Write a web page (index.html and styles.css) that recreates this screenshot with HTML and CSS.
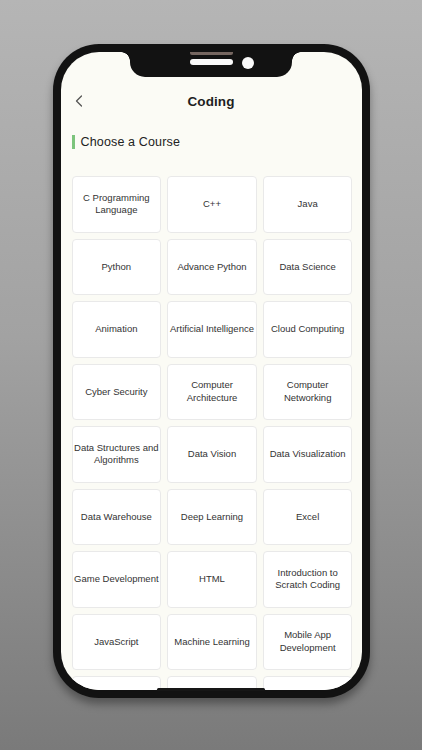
FILE: index.html
```html
<!DOCTYPE html>
<html>
<head>
<meta charset="utf-8">
<link rel="stylesheet" href="styles.css">
</head>
<body>
<div class="stage">
  <div class="phone">
    <div class="screen">
      <div class="notch">
        <span class="grille"></span>
        <span class="speaker"></span>
        <span class="camera"></span>
      </div>
      <div class="header">
        <div class="back">
          <svg width="8" height="12" viewBox="0 0 8 12"><path d="M6.5 1 L1.5 6 L6.5 11" fill="none" stroke="#555" stroke-width="1.3" stroke-linecap="round" stroke-linejoin="round"/></svg>
        </div>
        <div class="title">Coding</div>
        <div></div>
      </div>
      <div class="section">Choose a Course</div>
      <div class="grid">
        <div class="cell">C Programming Language</div>
        <div class="cell">C++</div>
        <div class="cell">Java</div>
        <div class="cell">Python</div>
        <div class="cell">Advance Python</div>
        <div class="cell">Data Science</div>
        <div class="cell">Animation</div>
        <div class="cell">Artificial Intelligence</div>
        <div class="cell">Cloud Computing</div>
        <div class="cell">Cyber Security</div>
        <div class="cell">Computer Architecture</div>
        <div class="cell">Computer Networking</div>
        <div class="cell">Data Structures and Algorithms</div>
        <div class="cell">Data Vision</div>
        <div class="cell">Data Visualization</div>
        <div class="cell">Data Warehouse</div>
        <div class="cell">Deep Learning</div>
        <div class="cell">Excel</div>
        <div class="cell">Game Development</div>
        <div class="cell">HTML</div>
        <div class="cell">Introduction to Scratch Coding</div>
        <div class="cell">JavaScript</div>
        <div class="cell">Machine Learning</div>
        <div class="cell">Mobile App Development</div>
        <div class="cell"></div>
        <div class="cell"></div>
        <div class="cell"></div>
      </div>
    </div>
    <div class="home"></div>
  </div>
</div>
</body>
</html>
```
FILE: styles.css
```css
html, body {
  margin: 0;
  padding: 0;
}
body {
  width: 422px;
  height: 750px;
  overflow: hidden;
  background: linear-gradient(180deg, #b5b5b5 0%, #a2a2a2 45%, #7a7a7a 100%);
  font-family: "Liberation Sans", Arial, sans-serif;
}
.stage {
  display: flex;
  justify-content: center;
  padding-top: 44px;
}
.phone {
  position: relative;
  width: 317px;
  height: 654px;
  box-sizing: border-box;
  padding: 8px;
  background: #121212;
  border-radius: 46px;
  box-shadow: 0 6px 8px rgba(0, 0, 0, 0.35);
}
.screen {
  position: relative;
  height: 638px;
  background: #fbfbf5;
  border-radius: 38px;
  overflow: hidden;
}
.notch {
  position: absolute;
  left: 69px;
  top: 0;
  width: 162px;
  height: 25px;
  background: #121212;
  border-radius: 0 0 15px 15px;
}
.notch::before,
.notch::after {
  content: "";
  position: absolute;
  top: 0;
  width: 9px;
  height: 9px;
}
.notch::before {
  left: -9px;
  background: radial-gradient(circle at 0 100%, transparent 8.5px, #121212 9px);
}
.notch::after {
  right: -9px;
  background: radial-gradient(circle at 100% 100%, transparent 8.5px, #121212 9px);
}
.grille {
  position: absolute;
  left: 60px;
  top: 0;
  width: 43px;
  height: 3px;
  background: #756660;
  border-radius: 0 0 2px 2px;
}
.speaker {
  position: absolute;
  left: 60px;
  top: 7px;
  width: 43px;
  height: 6px;
  background: #fafafa;
  border-radius: 3px;
}
.camera {
  position: absolute;
  left: 112px;
  top: 5px;
  width: 12px;
  height: 12px;
  background: #fafafa;
  border-radius: 50%;
}
.header {
  display: grid;
  grid-template-columns: 1fr auto 1fr;
  align-items: center;
  height: 44px;
  margin-top: 27px;
}
.back {
  padding-left: 14px;
  display: flex;
  align-items: center;
}
.back svg {
  display: block;
}
.title {
  font-size: 13.5px;
  font-weight: bold;
  color: #1e1e1e;
  letter-spacing: 0.1px;
}
.section {
  margin: 12px 0 0 11px;
  padding-left: 6px;
  border-left: 3px solid #7cc47c;
  height: 14px;
  line-height: 14px;
  font-size: 12.5px;
  letter-spacing: 0.15px;
  color: #222;
}
.grid {
  display: grid;
  grid-template-columns: repeat(3, 1fr);
  grid-auto-rows: 56.5px;
  gap: 6px;
  margin-top: 27px;
  padding: 0 9px 0 11px;
}
.cell {
  display: flex;
  align-items: center;
  justify-content: center;
  text-align: center;
  background: #ffffff;
  border: 1.5px solid #e9e9e9;
  border-radius: 4px;
  box-sizing: border-box;
  padding: 0;
  font-size: 9.5px;
  line-height: 12.5px;
  color: #333;
}
.home {
  position: absolute;
  left: 50%;
  bottom: 7px;
  width: 108px;
  height: 3.5px;
  margin-left: -54px;
  background: #161616;
  border-radius: 2px;
}
```
